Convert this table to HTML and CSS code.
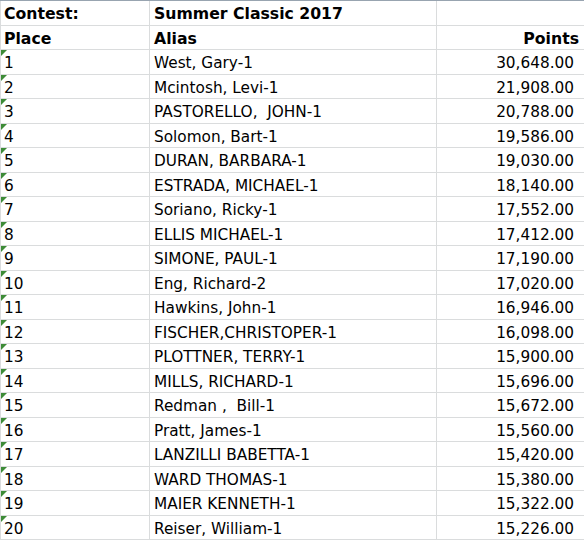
FILE: index.html
```html
<!DOCTYPE html>
<html>
<head>
<meta charset="utf-8">
<link rel="stylesheet" href="styles.css">
</head>
<body>
<div class="sheet">
  <div class="c a b">Contest:</div><div class="c b">Summer Classic 2017</div><div class="c n"></div>
  <div class="c a b">Place</div><div class="c b">Alias</div><div class="c n b hp">Points</div>

  <div class="c a f">1</div><div class="c">West, Gary-1</div><div class="c n">30,648.00</div>
  <div class="c a f">2</div><div class="c">Mcintosh, Levi-1</div><div class="c n">21,908.00</div>
  <div class="c a f">3</div><div class="c">PASTORELLO,  JOHN-1</div><div class="c n">20,788.00</div>
  <div class="c a f">4</div><div class="c">Solomon, Bart-1</div><div class="c n">19,586.00</div>
  <div class="c a f">5</div><div class="c">DURAN, BARBARA-1</div><div class="c n">19,030.00</div>
  <div class="c a f">6</div><div class="c">ESTRADA, MICHAEL-1</div><div class="c n">18,140.00</div>
  <div class="c a f">7</div><div class="c">Soriano, Ricky-1</div><div class="c n">17,552.00</div>
  <div class="c a f">8</div><div class="c">ELLIS MICHAEL-1</div><div class="c n">17,412.00</div>
  <div class="c a f">9</div><div class="c">SIMONE, PAUL-1</div><div class="c n">17,190.00</div>
  <div class="c a f">10</div><div class="c">Eng, Richard-2</div><div class="c n">17,020.00</div>
  <div class="c a f">11</div><div class="c">Hawkins, John-1</div><div class="c n">16,946.00</div>
  <div class="c a f">12</div><div class="c">FISCHER,CHRISTOPER-1</div><div class="c n">16,098.00</div>
  <div class="c a f">13</div><div class="c">PLOTTNER, TERRY-1</div><div class="c n">15,900.00</div>
  <div class="c a f">14</div><div class="c">MILLS, RICHARD-1</div><div class="c n">15,696.00</div>
  <div class="c a f">15</div><div class="c">Redman ,  Bill-1</div><div class="c n">15,672.00</div>
  <div class="c a f">16</div><div class="c">Pratt, James-1</div><div class="c n">15,560.00</div>
  <div class="c a f">17</div><div class="c">LANZILLI BABETTA-1</div><div class="c n">15,420.00</div>
  <div class="c a f">18</div><div class="c">WARD THOMAS-1</div><div class="c n">15,380.00</div>
  <div class="c a f">19</div><div class="c">MAIER KENNETH-1</div><div class="c n">15,322.00</div>
  <div class="c a f">20</div><div class="c">Reiser, William-1</div><div class="c n">15,226.00</div>
</div>
</body>
</html>
```
FILE: styles.css
```css
html, body {
  margin: 0;
  padding: 0;
  background: #ffffff;
}
.sheet {
  display: grid;
  grid-template-columns: 150px 287px 147px;
  grid-auto-rows: 24.5px;
  border-top: 1px solid #98a4b0;
  font-family: "DejaVu Sans", Verdana, sans-serif;
  font-size: 15.3px;
  color: #000;
  width: 584px;
  overflow: hidden;
}
.c {
  box-sizing: border-box;
  border-right: 1px solid #dadcdd;
  border-bottom: 1px solid #dadcdd;
  padding: 1px 4px 0 4px;
  line-height: 24px;
  white-space: pre;
  overflow: hidden;
  position: relative;
}
.a {
  border-left: 1px solid #dadcdd;
  padding-left: 3px;
}
.b {
  font-weight: bold;
  font-size: 15.7px;
}
.n {
  text-align: right;
  padding-right: 10px;
  border-right: none;
}
.hp {
  padding-right: 5px;
}
.f::before {
  content: "";
  position: absolute;
  left: 0;
  top: 0;
  width: 0;
  height: 0;
  border-top: 6px solid #3d8b37;
  border-right: 6px solid transparent;
}
```
